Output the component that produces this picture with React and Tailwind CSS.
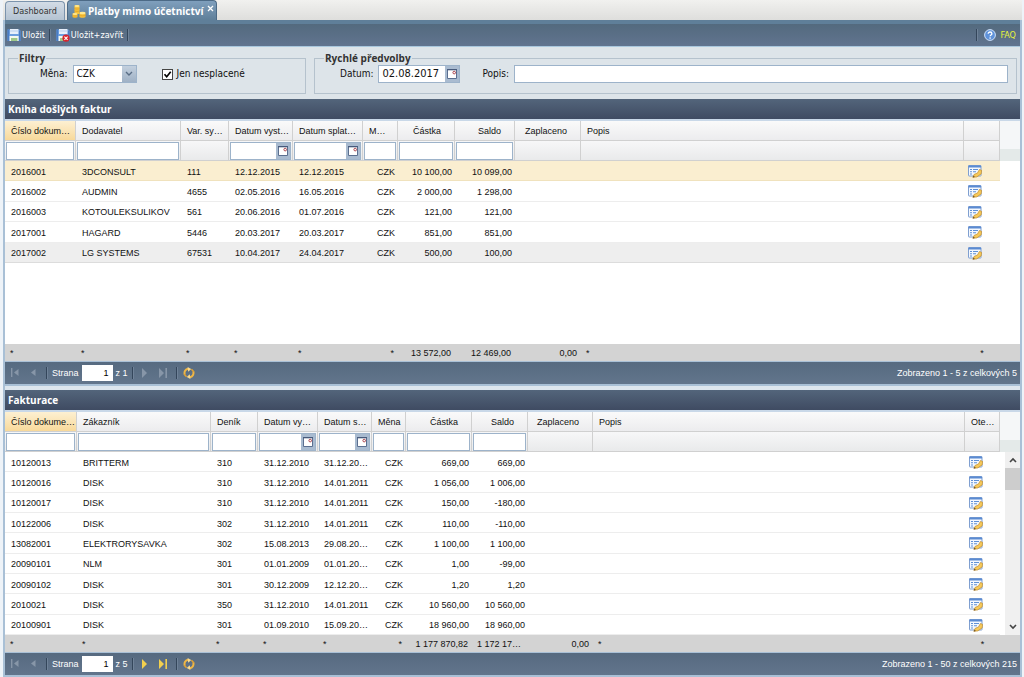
import React, { useState } from "react";
import clsx from "clsx";

const RECEIVED_COLUMNS = [
  { key: "number", label: "Číslo dokumentu", width: "w-[71px]", sorted: true, filter: "text", total: "*" },
  { key: "partner", label: "Dodavatel", width: "w-[105px]", filter: "text", total: "*" },
  { key: "symbol", label: "Var. symbol", width: "w-[48px]", total: "*" },
  { key: "issued", label: "Datum vystavení", width: "w-[64px]", filter: "date", total: "*" },
  { key: "due", label: "Datum splatnosti", width: "w-[70px]", filter: "date", total: "*" },
  { key: "currency", label: "M…", width: "w-[35px]", filter: "text", total: "*", right: true },
  { key: "amount", label: "Částka", width: "w-[57px]", filter: "text", total: "13 572,00", right: true, number: true },
  { key: "balance", label: "Saldo", width: "w-[60px]", filter: "text", total: "12 469,00", right: true, number: true },
  { key: "paid", label: "Zaplaceno", width: "w-[66px]", total: "0,00", right: true, number: true },
  { key: "note", label: "Popis", width: "w-auto", total: "*" },
  { key: "open", label: "", width: "w-[36px]", total: "*", action: true },
];

const ISSUED_COLUMNS = [
  { key: "number", label: "Číslo dokumentu", width: "w-[72px]", sorted: true, filter: "text", total: "*" },
  { key: "partner", label: "Zákazník", width: "w-[134px]", filter: "text", total: "*" },
  { key: "journal", label: "Deník", width: "w-[47px]", filter: "text", total: "*" },
  { key: "issued", label: "Datum vystavení", width: "w-[60px]", filter: "date", total: "*" },
  { key: "due", label: "Datum splatnosti", width: "w-[54px]", filter: "date", total: "*" },
  { key: "currency", label: "Měna", width: "w-[34px]", filter: "text", total: "*", right: true },
  { key: "amount", label: "Částka", width: "w-[66px]", filter: "text", total: "1 177 870,82", right: true, number: true },
  { key: "balance", label: "Saldo", width: "w-[56px]", filter: "text", total: "1 172 174,82", right: true, number: true },
  { key: "paid", label: "Zaplaceno", width: "w-[65px]", total: "0,00", right: true, number: true },
  { key: "note", label: "Popis", width: "w-auto", total: "*" },
  { key: "open", label: "Otevřít", width: "w-[35px]", total: "*", action: true },
];

const RECEIVED = [
  { number: "2016001", partner: "3DCONSULT", symbol: "111", issued: "12.12.2015", due: "12.12.2015", amount: "10 100,00", balance: "10 099,00", state: "selected" },
  { number: "2016002", partner: "AUDMIN", symbol: "4655", issued: "02.05.2016", due: "16.05.2016", amount: "2 000,00", balance: "1 298,00" },
  { number: "2016003", partner: "KOTOULEKSULIKOV", symbol: "561", issued: "20.06.2016", due: "01.07.2016", amount: "121,00", balance: "121,00" },
  { number: "2017001", partner: "HAGARD", symbol: "5446", issued: "20.03.2017", due: "20.03.2017", amount: "851,00", balance: "851,00" },
  { number: "2017002", partner: "LG SYSTEMS", symbol: "67531", issued: "10.04.2017", due: "24.04.2017", amount: "500,00", balance: "100,00", state: "hover" },
];

const ISSUED = [
  { number: "10120013", partner: "BRITTERM", journal: "310", issued: "31.12.2010", due: "31.12.2010", amount: "669,00", balance: "669,00" },
  { number: "10120016", partner: "DISK", journal: "310", issued: "31.12.2010", due: "14.01.2011", amount: "1 056,00", balance: "1 006,00" },
  { number: "10120017", partner: "DISK", journal: "310", issued: "31.12.2010", due: "14.01.2011", amount: "150,00", balance: "-180,00" },
  { number: "10122006", partner: "DISK", journal: "302", issued: "31.12.2010", due: "14.01.2011", amount: "110,00", balance: "-110,00" },
  { number: "13082001", partner: "ELEKTRORYSAVKA", journal: "302", issued: "15.08.2013", due: "29.08.2013", amount: "1 100,00", balance: "1 100,00" },
  { number: "20090101", partner: "NLM", journal: "301", issued: "01.01.2009", due: "01.01.2009", amount: "1,00", balance: "-99,00" },
  { number: "20090102", partner: "DISK", journal: "301", issued: "30.12.2009", due: "12.12.2009", amount: "1,20", balance: "1,20" },
  { number: "2010021", partner: "DISK", journal: "350", issued: "31.12.2010", due: "14.01.2011", amount: "10 560,00", balance: "10 560,00" },
  { number: "20100901", partner: "DISK", journal: "301", issued: "01.09.2010", due: "15.09.2010", amount: "18 960,00", balance: "18 960,00" },
];

const DiskIcon = ({ withCross }) => (
  <svg viewBox="0 0 14 14" className="size-[14px] shrink-0">
    <path d="M.5 1.5h11.8l1.2 1.2V13H.5z" fill="#6d9fe0" />
    <path d="M.5 1.5h1.6V13H.5zM12 2.3l1.5.6V13H12z" fill="#4a7cc4" />
    <rect x="3" y="1" width="8.4" height="5" fill="#e6effb" />
    <path d="M3 3h8.4" stroke="#b9cfee" />
    <rect x="2.6" y="8" width="9" height="5" fill="#f4f8f0" />
    <rect x="4" y="10" width="6.4" height="3" fill="#9cc78a" />
    {withCross && (
      <>
        <circle cx="10" cy="10.2" r="3.6" fill="#d8232b" />
        <path d="M8.4 8.6l3.2 3.2M11.6 8.6l-3.2 3.2" stroke="#fff" strokeWidth="1.1" />
      </>
    )}
  </svg>
);

const CoinsIcon = () => (
  <svg viewBox="0 0 14 14" className="size-[14px] shrink-0">
    <path d="M2.5 2c0-1.3 5-1.3 5 0v8h-5z" fill="#f6c23c" />
    <ellipse cx="5" cy="2" rx="2.5" ry="1.1" fill="#ffe88f" />
    <path d="M.5 10c0-1.2 5-1.2 5 0v3c0 1-5 1-5 0z" fill="#f0b42d" />
    <ellipse cx="3" cy="10" rx="2.5" ry="1.1" fill="#ffe88f" />
    <path d="M7.5 9c0-1.2 6-1.2 6 0v4c0 1-6 1-6 0z" fill="#f6c23c" />
    <ellipse cx="10.5" cy="9" rx="3" ry="1.2" fill="#ffe88f" />
    <path d="M2.5 4.5c1 .8 4 .8 5 0M2.5 6.8c1 .8 4 .8 5 0M7.5 11.3c1 .8 5 .8 6 0" fill="none" stroke="#d99618" strokeWidth=".6" />
  </svg>
);

const HelpIcon = () => (
  <svg viewBox="0 0 12 12" className="size-3 shrink-0">
    <circle cx="6" cy="6" r="5.4" fill="#5f92da" stroke="#cfe2fb" strokeWidth="1" />
    <path d="M4.2 4.7c0-2.3 3.7-2.2 3.7 0C7.9 6 6.1 6 6.1 7.3" fill="none" stroke="#fff" strokeWidth="1.3" />
    <circle cx="6.1" cy="9.1" r=".8" fill="#fff" />
  </svg>
);

const CalendarIcon = () => (
  <svg viewBox="0 0 12 12" className="size-3">
    <path d="M1.5 1.5h9v9h-9z" fill="#fff" stroke="#5b6f90" />
    <path d="M1 1.7h10" stroke="#46597a" strokeWidth="1.2" />
    <circle cx="8.2" cy="4.6" r="1.3" fill="#fff" stroke="#a5343c" strokeWidth=".9" />
  </svg>
);

const EditFormIcon = () => (
  <svg viewBox="0 0 14 13" className="h-[13px] w-[14px]">
    <rect x=".5" y=".5" width="12.5" height="10.5" rx=".5" fill="#f4f8fe" stroke="#7f9fd0" />
    <path d="M.5 .5h12.5v2H.5z" fill="#5b8bd2" />
    <path d="M2 4.5h2M5 4.5h5M2 6.7h2M5 6.7h3M2 9h2" stroke="#5f90d6" strokeWidth="1.1" />
    <path d="M4.8 12.3l1.4-3 3.2-1.2 2-3.6 2.2.8-.4 3.6-4.4 3z" fill="#f6c95a" stroke="#b98222" strokeWidth=".6" />
    <path d="M4.8 12.4l.8-1.7 1.3 1.2z" fill="#5b4322" />
  </svg>
);

const RefreshIcon = () => (
  <svg viewBox="0 0 12 12" className="size-3">
    <path d="M1.8 7.6A4.4 4.4 0 0 1 5.2 1.7M10.2 4.4a4.4 4.4 0 0 1-3.4 5.9" fill="none" stroke="#efb645" strokeWidth="2" />
    <path d="M4.6 0l3.6 2-3 2.8zM7.4 12l-3.6-2 3-2.8z" fill="#f9da90" />
    <path d="M8.4 2.2l2.4 2.6M3.6 9.8L1.2 7.2" stroke="#e0a233" strokeWidth="1.6" />
  </svg>
);

const PageArrow = ({ kind, active }) => (
  <svg viewBox="0 0 10 10" className="size-[10px]" fill={active ? "#f3d04e" : "#8796a8"}>
    {kind === "first" && <path d="M1 0h1.4v9H1zM8.5 1v7L4 4.5z" />}
    {kind === "prev" && <path d="M7.5 1v7L3 4.5z" />}
    {kind === "next" && <path d="M3 0v10l5-5z" />}
    {kind === "last" && <path d="M1 0v10l5-5zM7.4 0H9v10H7.4z" />}
  </svg>
);

const Divider = ({ className }) => (
  <span className={clsx("h-3 w-[2px] border-r border-[#6f8298] bg-[#34465b]", className)} />
);

const Columns = ({ columns }) => (
  <colgroup>
    {columns.map((col) => (
      <col key={col.key} className={col.width} />
    ))}
  </colgroup>
);

const GridHeader = ({ columns, title }) => (
  <div className="flex border-t-2 border-[#c9d8e8] bg-[#f5f7f8]">
    <table className="w-full min-w-0 flex-1 table-fixed border-separate border-spacing-0">
      <Columns columns={columns} />
      <thead>
        <tr className="h-5">
          {columns.map((col) => (
            <th
              key={col.key}
              className={clsx(
                "truncate border-r border-b border-[#d0d0d0] py-0 font-normal",
                col.number && "pr-[13px] text-right",
                !col.number && "pl-[6px] text-left",
                !col.number && (col.sorted ? "pr-0" : "pr-[2px]"),
                col.sorted
                  ? "bg-linear-to-b from-[#fdf0d2] to-[#f8d99a]"
                  : "bg-linear-to-b from-[#fafafa] to-[#ececee]"
              )}
            >
              {col.label}
            </th>
          ))}
        </tr>
        <tr className="h-5">
          {columns.map((col) => (
            <td
              key={col.key}
              className="border-r border-b border-[#d0d0d0] bg-linear-to-b from-[#f7f7f8] to-[#e9eaeb] px-px py-0"
            >
              {col.filter && (
                <div className="flex h-[18px] border border-[#9db3ca] bg-white">
                  <input
                    type="text"
                    aria-label={`${title}: ${col.label}`}
                    className="w-0 min-w-0 flex-1 px-1 outline-none"
                  />
                  {col.filter === "date" && (
                    <button
                      type="button"
                      aria-label={`${col.label} kalendář`}
                      className="flex w-[14px] items-center justify-center bg-[#a9bbd0]"
                    >
                      <CalendarIcon />
                    </button>
                  )}
                </div>
              )}
            </td>
          ))}
        </tr>
      </thead>
    </table>
    <div className="flex w-5 flex-col">
      <div className="flex-1" />
      <div className="h-3 bg-[#e4eae9]" />
    </div>
  </div>
);

const GridRows = ({ columns, rows, className }) => (
  <table className={clsx("w-full min-w-0 flex-1 table-fixed border-collapse", className)}>
    <Columns columns={columns} />
    <tbody>
      {rows.map((row) => (
        <tr
          key={row.number}
          className={clsx(
            "border-b",
            row.state === "selected" && "border-[#f0e2bd] bg-[#faeed0]",
            row.state === "hover" && "border-[#dcdcdc] bg-[#eeeeee]",
            !row.state && "border-[#ededed]"
          )}
        >
          {columns.map((col) => (
            <td
              key={col.key}
              className={clsx("truncate pt-[2px] pr-[3px] pb-0", col.right ? "pl-0 text-right" : "pl-[6px]")}
            >
              {col.action ? (
                <button type="button" aria-label={`Otevřít ${row.number}`} className="-ml-[2px] block">
                  <EditFormIcon />
                </button>
              ) : col.key === "currency" ? (
                "CZK"
              ) : (
                row[col.key]
              )}
            </td>
          ))}
        </tr>
      ))}
    </tbody>
  </table>
);

const GridTotals = ({ columns }) => (
  <div className="flex h-[17px] shrink-0 bg-[#d3d3d3]">
    <table className="w-full min-w-0 flex-1 table-fixed border-collapse">
      <Columns columns={columns} />
      <tbody>
        <tr>
          {columns.map((col) => (
            <td
              key={col.key}
              className={clsx(
                "truncate p-0",
                col.action ? "text-center" : col.right ? "pr-[4px] pl-[5px] text-right" : "pl-[5px]"
              )}
            >
              {col.total}
            </td>
          ))}
        </tr>
      </tbody>
    </table>
    <div className="w-5" />
  </div>
);

const Scrollbar = () => (
  <div className="flex w-[15px] flex-col bg-[#f0f0f0]">
    <button type="button" aria-label="Nahoru" className="flex h-4 items-center justify-center">
      <svg viewBox="0 0 8 6" className="h-[6px] w-2">
        <path d="M1 5l3-3 3 3" fill="none" stroke="#444" strokeWidth="1.6" />
      </svg>
    </button>
    <div className="h-[22px] bg-[#cdcdcd]" />
    <div className="flex-1" />
    <button type="button" aria-label="Dolů" className="flex h-4 items-center justify-center">
      <svg viewBox="0 0 8 6" className="h-[6px] w-2">
        <path d="M1 1l3 3 3-3" fill="none" stroke="#444" strokeWidth="1.6" />
      </svg>
    </button>
  </div>
);

const Pager = ({ id, pages, summary }) => {
  const [page, setPage] = useState("1");
  const more = pages > 1;

  return (
    <div className="flex h-[22px] shrink-0 items-center bg-linear-to-b from-[#566a80] to-[#62758c] pr-[3px] pl-[5px] text-white">
      <button type="button" aria-label="První strana">
        <PageArrow kind="first" />
      </button>
      <button type="button" aria-label="Předchozí strana" className="ml-2">
        <PageArrow kind="prev" />
      </button>
      <Divider className="mr-1 ml-2" />
      <label htmlFor={id}>Strana</label>
      <input
        id={id}
        value={page}
        onChange={(e) => setPage(e.target.value)}
        className="mx-[3px] h-4 w-[31px] bg-white pr-1 text-right text-black"
      />
      <span>z {pages}</span>
      <Divider className="ml-1" />
      <button type="button" aria-label="Další strana" className="ml-[5px]">
        <PageArrow kind="next" active={more} />
      </button>
      <button type="button" aria-label="Poslední strana" className="ml-[9px]">
        <PageArrow kind="last" active={more} />
      </button>
      <Divider className="ml-2" />
      <button type="button" aria-label="Obnovit" className="ml-[5px]">
        <RefreshIcon />
      </button>
      <span className="ml-auto">{summary}</span>
    </div>
  );
};

const GridPanel = ({ id, title, columns, rows, tableClass, pages, summary, scroll }) => (
  <section className="flex min-h-0 flex-1 flex-col border-b-2 border-[#a9c0d6]">
    <h2 className="flex h-5 shrink-0 items-center bg-linear-to-b from-[#53657b] to-[#3f4b62] px-[3px] font-['Open_Sans','Noto_Sans',sans-serif] text-[10px] font-bold text-white">
      {title}
    </h2>
    <GridHeader columns={columns} title={title} />
    <div className="flex min-h-0 flex-1 items-start overflow-hidden bg-white">
      <GridRows columns={columns} rows={rows} className={tableClass} />
      <div className="flex w-5 justify-end self-stretch">{scroll && <Scrollbar />}</div>
    </div>
    <GridTotals columns={columns} />
    <div className="h-px shrink-0 bg-[#a9c0d6]" />
    <Pager id={id} pages={pages} summary={summary} />
  </section>
);

const App = () => {
  const [currency, setCurrency] = useState("CZK");
  const [unpaidOnly, setUnpaidOnly] = useState(true);
  const [date, setDate] = useState("02.08.2017");
  const [note, setNote] = useState("");

  return (
    <div className="flex h-screen flex-col bg-[#eef3f8] pr-[2px] pl-[3px] font-['Liberation_Sans',Arial,sans-serif] text-[9px] leading-3 text-[#111]">
      {/* Tabs */}
      <nav className="flex h-5 shrink-0 items-end gap-[2px] bg-linear-to-b from-[#f1f1ef] to-[#dededc] pl-[2px] font-['DejaVu_Sans_Condensed','DejaVu_Sans',sans-serif]">
        <button
          type="button"
          className="h-[19px] rounded-t-sm border border-b-0 border-[#7b93ac] bg-linear-to-b from-[#d3dce6] to-[#b4c3d2] px-[7px] text-[#333]"
        >
          Dashboard
        </button>
        <div className="flex h-5 items-center gap-[2px] rounded-t-sm border border-b-0 border-[#4c6a86] bg-linear-to-b from-[#7f9fbd] to-[#5f7f99] pr-px pl-1 text-white">
          <CoinsIcon />
          <button type="button" className="font-['Open_Sans','Noto_Sans',sans-serif] text-[10px] font-bold">
            Platby mimo účetnictví
          </button>
          <button type="button" aria-label="Zavřít" className="mb-1 p-px">
            <svg viewBox="0 0 7 7" className="size-[7px]">
              <path d="M1 1l5 5M6 1L1 6" stroke="#fff" strokeWidth="1.3" />
            </svg>
          </button>
        </div>
      </nav>

      <main className="flex min-h-0 flex-1 flex-col border-x-2 border-[#a9c0d6] font-['Liberation_Sans',Arial,sans-serif]">
        {/* Toolbar */}
        <div className="flex h-[27px] shrink-0 items-center border-t-4 border-b border-t-[#5f7f99] border-b-[#a9c7dd] bg-linear-to-b from-[#536a7e] to-[#61748f] pr-1 pl-[2px] font-['DejaVu_Sans_Condensed','DejaVu_Sans',sans-serif] text-white">
          <button type="button" className="flex items-center gap-px">
            <DiskIcon />
            Uložit
          </button>
          <Divider className="ml-1" />
          <button type="button" className="ml-[5px] flex items-center gap-px">
            <DiskIcon withCross />
            Uložit+zavřít
          </button>
          <Divider className="ml-1" />
          <Divider className="mr-[6px] ml-auto" />
          <a href="#faq" className="flex items-center gap-1 text-[#e6f23c]">
            <HelpIcon />
            FAQ
          </a>
        </div>

        {/* Filters */}
        <div className="flex h-[52px] shrink-0 items-start gap-2 bg-[#dde4e9] px-[3px] pt-[5px] font-['DejaVu_Sans_Condensed','DejaVu_Sans',sans-serif] text-[10px]">
          <fieldset className="h-[42px] w-[298px] shrink-0 border border-[#b5c2cd] pl-[31px]">
            <legend className="-ml-[22px] px-px font-['Open_Sans','Noto_Sans',sans-serif] font-bold text-[#333]">
              Filtry
            </legend>
            <div className="flex h-5 items-center">
              <label htmlFor="currency">Měna:</label>
              <div className="relative ml-[5px] flex h-[18px] w-16 border border-[#9db3ca] bg-white">
                <select
                  id="currency"
                  value={currency}
                  onChange={(e) => setCurrency(e.target.value)}
                  className="w-full appearance-none pl-[3px]"
                >
                  <option>CZK</option>
                  <option>EUR</option>
                </select>
                <span className="pointer-events-none absolute inset-y-0 right-0 flex w-[14px] items-center justify-center bg-linear-to-b from-[#c3d0de] to-[#9fb1c5]">
                  <svg viewBox="0 0 8 6" className="h-[6px] w-2">
                    <path d="M1 1l3 3 3-3" fill="none" stroke="#5a6e86" strokeWidth="1.4" />
                  </svg>
                </span>
              </div>
              <label className="ml-[25px] flex items-center gap-1">
                <span className="relative flex size-[11px]">
                  <input
                    type="checkbox"
                    checked={unpaidOnly}
                    onChange={(e) => setUnpaidOnly(e.target.checked)}
                    className="size-[11px] appearance-none border border-[#444] bg-white"
                  />
                  {unpaidOnly && (
                    <svg viewBox="0 0 11 11" className="pointer-events-none absolute inset-0">
                      <path d="M2.5 5.2l2.2 2.5 4-5" fill="none" stroke="#000" strokeWidth="1.7" />
                    </svg>
                  )}
                </span>
                Jen nesplacené
              </label>
            </div>
          </fieldset>

          <fieldset className="h-[42px] min-w-0 flex-1 border border-[#b5c2cd] pr-2 pl-[25px]">
            <legend className="-ml-[16px] px-px font-['Open_Sans','Noto_Sans',sans-serif] font-bold text-[#333]">
              Rychlé předvolby
            </legend>
            <div className="flex h-5 items-center">
              <label htmlFor="date">Datum:</label>
              <div className="ml-[5px] flex h-[18px] w-[82px] border border-[#9db3ca] bg-white">
                <input
                  id="date"
                  value={date}
                  onChange={(e) => setDate(e.target.value)}
                  className="w-0 min-w-0 flex-1 pl-[3px] text-[11px]"
                />
                <button
                  type="button"
                  aria-label="Kalendář"
                  className="flex w-[14px] items-center justify-center bg-[#a9bbd0]"
                >
                  <CalendarIcon />
                </button>
              </div>
              <label htmlFor="note" className="ml-[22px]">
                Popis:
              </label>
              <input
                id="note"
                value={note}
                onChange={(e) => setNote(e.target.value)}
                className="ml-[5px] h-[18px] min-w-0 flex-1 border border-[#9db3ca] bg-white px-1"
              />
            </div>
          </fieldset>
        </div>

        <div className="flex min-h-0 flex-1 flex-col gap-1 bg-[#dde6ee]">
          <GridPanel
            id="received-page"
            title="Kniha došlých faktur"
            columns={RECEIVED_COLUMNS}
            rows={RECEIVED}
            tableClass="h-[102px]"
            pages={1}
            summary="Zobrazeno 1 - 5 z celkových 5"
          />
          <GridPanel
            id="issued-page"
            title="Fakturace"
            columns={ISSUED_COLUMNS}
            rows={ISSUED}
            tableClass="h-[183px]"
            pages={5}
            summary="Zobrazeno 1 - 50 z celkových 215"
            scroll
          />
        </div>
      </main>
    </div>
  );
};

export default App;
